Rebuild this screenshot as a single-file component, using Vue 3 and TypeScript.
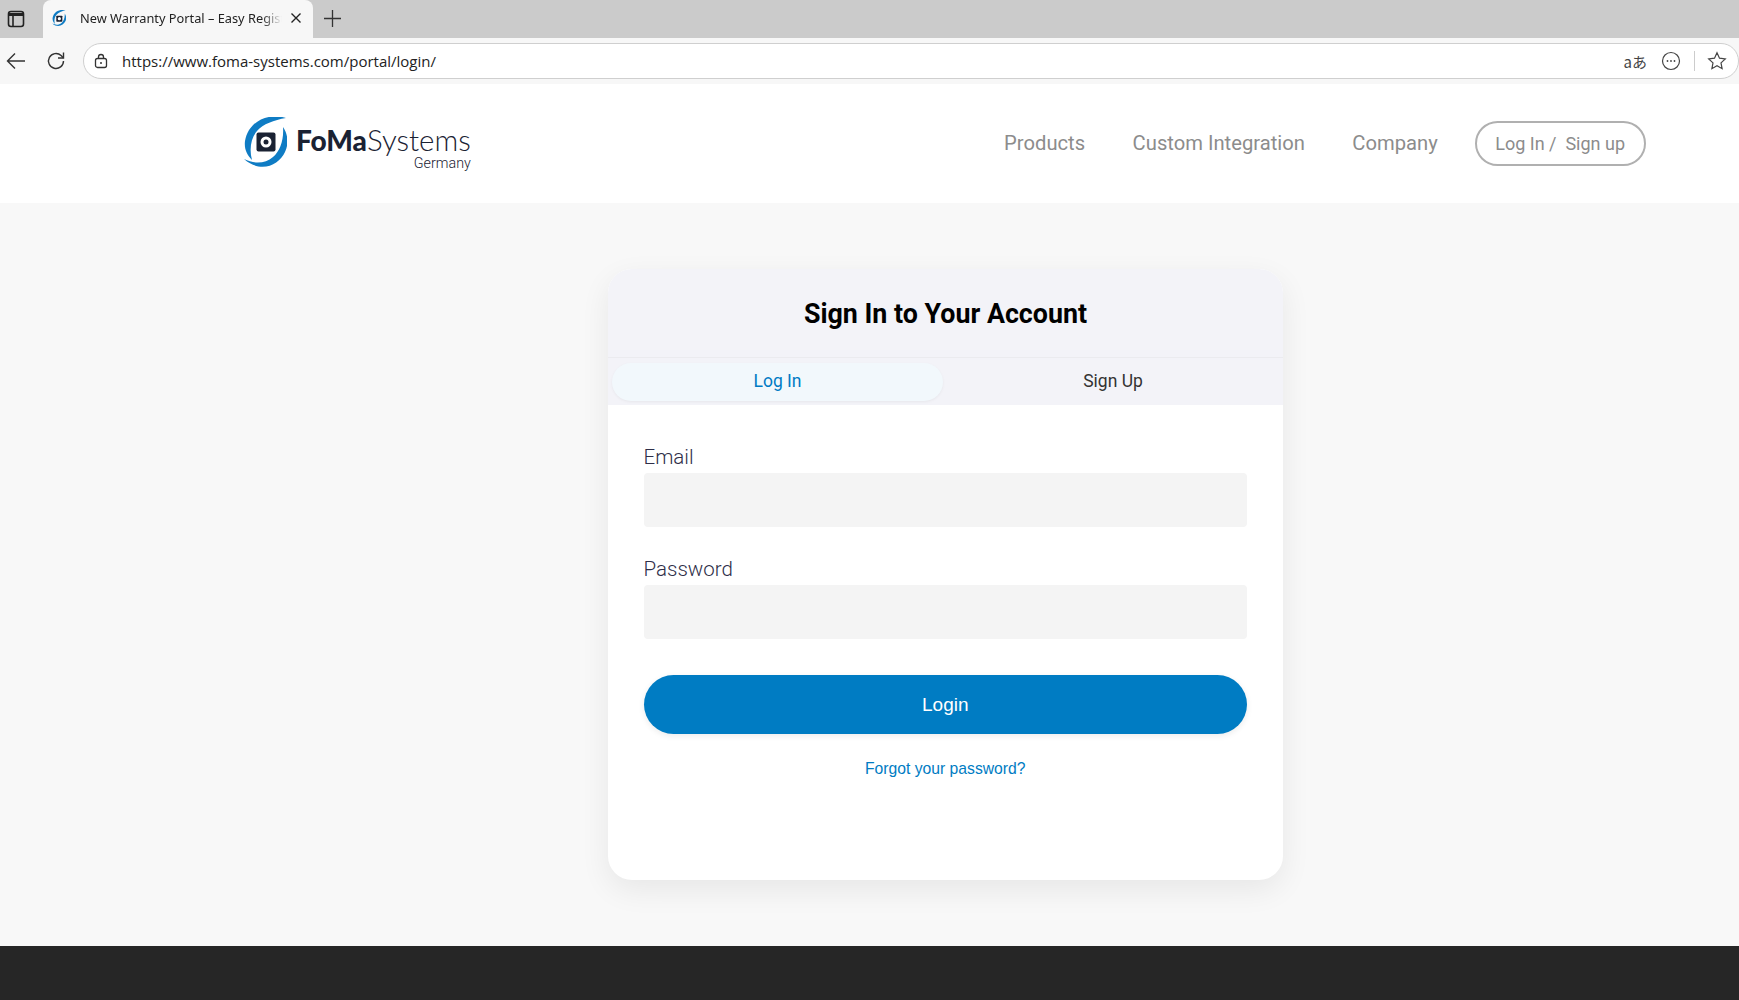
<template>
  <div class="page">
    <div class="tabbar">
      <div class="tab-toggle">
        <svg width="18" height="18" viewBox="0 0 18 18" fill="none" stroke="#222" stroke-width="1.6">
          <rect x="1.500" y="1.500" width="15" height="15" rx="2.500" />
          <path d="M1.500 4.500h15" stroke-width="3" />
          <path d="M6 5v11" />
        </svg>
      </div>
      <div class="tab">
        <svg class="favicon" width="14" height="17" viewBox="0 0 44 52">
          <path d="M43 1C28-4 6 2 2 24c-1 8 2 14 7 19-3-11-1-22 5-29C20 7 31 3 43 1z" fill="#0f7cc4" />
          <path d="M40 10c5 7 6 17 2 25C36 48 18 57 1 42c10 5 21 5 29-2 7-6 11-17 10-30z" fill="#0f7cc4" />
          <rect x="13.500" y="17" width="19" height="19" rx="2" fill="#1a2233" />
          <circle cx="23" cy="26.500" r="5" fill="#fff" />
        </svg>
        <span class="tab-title">New Warranty Portal – Easy Regist</span>
        <svg width="12" height="12" viewBox="0 0 12 12" stroke="#222" stroke-width="1.4">
          <path d="M1.500 1.500l9 9M10.500 1.500l-9 9" />
        </svg>
      </div>
      <svg class="new-tab" width="17" height="17" viewBox="0 0 17 17" stroke="#333" stroke-width="1.3">
        <path d="M8.500 0v17M0 8.500h17" />
      </svg>
    </div>

    <div class="toolbar">
      <svg class="nav-btn" width="20" height="18" viewBox="0 0 20 18" fill="none" stroke="#333" stroke-width="1.4">
        <path d="M19 9H1.500M9 1.500L1.500 9 9 16.500" />
      </svg>
      <svg class="nav-btn reload" width="20" height="20" viewBox="0 0 20 20" fill="none" stroke="#333" stroke-width="1.4">
        <path d="M17.500 10a7.500 7.500 0 1 1-2.400-5.500L17.500 7" />
        <path d="M17.500 1.500V7H12" />
      </svg>
      <div class="urlbar">
        <svg width="14" height="16" viewBox="0 0 14 16" fill="none" stroke="#333" stroke-width="1.3">
          <rect x="1.500" y="5.500" width="11" height="9" rx="2" />
          <path d="M4.500 5.500V4a2.500 2.500 0 0 1 5 0v1.500" />
          <circle cx="7" cy="10" r="1" fill="#333" stroke="none" />
        </svg>
        <span class="url">https://www.foma-systems.com/portal/login/</span>
        <span class="translate">aあ</span>
        <svg width="20" height="20" viewBox="0 0 20 20" fill="none" stroke="#444" stroke-width="1.2">
          <circle cx="10" cy="10" r="8.500" />
          <circle cx="6.500" cy="10" r=".9" fill="#444" stroke="none" />
          <circle cx="10" cy="10" r=".9" fill="#444" stroke="none" />
          <circle cx="13.500" cy="10" r=".9" fill="#444" stroke="none" />
        </svg>
        <span class="url-sep"></span>
        <svg width="20" height="20" viewBox="0 0 20 20" fill="none" stroke="#444" stroke-width="1.2">
          <path d="M10 1.800l2.500 5.400 5.800.7-4.300 4 1.100 5.800-5.100-2.900-5.100 2.900 1.100-5.800-4.300-4 5.800-.7z" />
        </svg>
      </div>
    </div>

    <header class="site-header">
      <a class="logo">
        <svg width="44" height="52" viewBox="0 0 44 52">
          <path d="M43 1C28-4 6 2 2 24c-1 8 2 14 7 19-3-11-1-22 5-29C20 7 31 3 43 1z" fill="#0f7cc4" />
          <path d="M40 10c5 7 6 17 2 25C36 48 18 57 1 42c10 5 21 5 29-2 7-6 11-17 10-30z" fill="#0f7cc4" />
          <rect x="13.500" y="15.500" width="19" height="19" rx="2" fill="#1a2233" />
          <circle cx="23" cy="25" r="5.500" fill="#fff" />
          <circle cx="23" cy="25" r="2.500" fill="#1a2233" />
        </svg>
        <div class="logo-text">
          <div class="logo-name"><b>FoMa</b>Systems</div>
          <div class="logo-sub">Germany</div>
        </div>
      </a>
      <nav class="site-nav">
        <a v-for="item in navItems" :key="item">{{ item }}</a>
        <a class="auth-link">Log In /&nbsp; Sign up</a>
      </nav>
    </header>

    <main class="main">
      <section class="card">
        <div class="card-head">
          <h1>Sign In to Your Account</h1>
        </div>
        <div class="tabs">
          <button class="tab-btn active">Log In</button>
          <button class="tab-btn">Sign Up</button>
        </div>
        <form class="form" @submit.prevent>
          <label for="email">Email</label>
          <input id="email" v-model="email" type="email" />
          <label for="password">Password</label>
          <input id="password" v-model="password" type="password" />
          <button class="submit" type="submit">Login</button>
          <a class="forgot">Forgot your password?</a>
        </form>
      </section>
    </main>

    <footer class="site-footer"></footer>
  </div>
</template>

<script setup lang="ts">
import { ref } from 'vue'

const navItems: string[] = ['Products', 'Custom Integration', 'Company']
const email = ref('')
const password = ref('')
</script>

<style>
html,
body {
  margin: 0;
  overflow: hidden;
}
</style>

<style scoped>
.page {
  height: 1000px;
  display: flex;
  flex-direction: column;
  background: #f8f8f8;
  font-family: Roboto, sans-serif;
}

/* browser chrome */
.tabbar {
  height: 38px;
  flex: none;
  display: flex;
  align-items: center;
  background: #cbcbcb;
}

.tab-toggle {
  width: 43px;
  padding: 0 0 1px 7px;
  box-sizing: border-box;
  display: flex;
}

.tab {
  width: 270px;
  height: 38px;
  box-sizing: border-box;
  padding: 0 11px 2px 9px;
  display: flex;
  align-items: center;
  background: #f7f7f7;
  border-radius: 8px 8px 0 0;
  font: 12.800px "Noto Sans", sans-serif;
  color: #222;
}

.favicon {
  flex: none;
  margin-right: 14px;
}

.tab-title {
  flex: 1;
  min-width: 0;
  overflow: hidden;
  white-space: nowrap;
  -webkit-mask-image: linear-gradient(to right, #000 90%, transparent);
  mask-image: linear-gradient(to right, #000 90%, transparent);
  margin-right: 8px;
}

.new-tab {
  margin: 0 0 2px 11px;
}

.toolbar {
  height: 46px;
  flex: none;
  display: flex;
  align-items: center;
  box-sizing: border-box;
  padding-left: 6px;
  background: #f7f7f7;
}

.nav-btn {
  flex: none;
  margin-right: 20px;
}

.reload {
  margin-right: 17px;
}

.urlbar {
  flex: 1;
  height: 36px;
  box-sizing: border-box;
  display: flex;
  align-items: center;
  padding: 0 11px 0 10px;
  background: #fff;
  border: 1px solid #cfcfcf;
  border-radius: 18px;
}

.url {
  flex: 1;
  margin-left: 14px;
  font: 15px "Open Sans", sans-serif;
  color: #222;
}

.translate {
  font: 15px "Noto Sans CJK JP", sans-serif;
  color: #444;
  margin-right: 14px;
}

.url-sep {
  width: 1px;
  height: 20px;
  margin: 0 12px 0 13px;
  background: #ccc;
}

/* site header */
.site-header {
  height: 119px;
  flex: none;
  box-sizing: border-box;
  display: flex;
  align-items: center;
  justify-content: space-between;
  padding: 0 93px 1px 243px;
  background: #fff;
}

.logo {
  display: flex;
  align-items: center;
  gap: 9px;
}

.logo-text {
  margin-top: 9px;
  color: #1a2233;
  line-height: 1;
}

.logo-name {
  font: 300 29.500px/28px Lato, sans-serif;
}

.logo-name b {
  font-size: 28px;
  font-weight: 900;
}

.logo-sub {
  margin-top: 2px;
  text-align: right;
  font: 300 14.300px/14px Roboto, sans-serif;
}

.site-nav {
  display: flex;
  align-items: center;
  gap: 47.500px;
  font-size: 20.200px;
  color: #8c8c8c;
}

.auth-link {
  height: 45px;
  box-sizing: border-box;
  display: flex;
  align-items: center;
  margin-left: -10px;
  padding: 0 19px 0 18px;
  border: 2px solid #b0b0b0;
  border-radius: 23px;
  font-size: 18px;
}

/* login card */
.main {
  flex: 1;
  display: flex;
  justify-content: center;
  align-items: flex-start;
  padding: 66px 0 0 152px;
  background: #f8f8f8;
}

.card {
  width: 675px;
  height: 611px;
  overflow: hidden;
  border-radius: 24px;
  background: #fff;
  box-shadow: 0 10px 30px rgba(0, 0, 0, 0.07);
}

.card-head {
  height: 89px;
  box-sizing: border-box;
  padding-top: 2px;
  display: flex;
  align-items: center;
  justify-content: center;
  background: #f3f3f8;
  border-bottom: 1px solid #ebebef;
}

.card-head h1 {
  margin: 0;
  font-size: 26.800px;
  font-weight: 700;
  color: #000;
}

.tabs {
  height: 47px;
  box-sizing: border-box;
  padding: 5px 0 4px 4px;
  display: grid;
  grid-template-columns: 331px 1fr;
  background: #f3f3f8;
}

.tab-btn {
  padding: 0 0 2px;
  border: 0;
  border-radius: 19px;
  background: transparent;
  font: 17.500px Roboto, sans-serif;
  color: #333;
}

.tab-btn.active {
  background: #f2f8fc;
  color: #007bc4;
  box-shadow: 0 1px 3px rgba(0, 0, 0, 0.05);
}

.form {
  display: flex;
  flex-direction: column;
  padding: 40px 36px 0 35.500px;
}

label {
  margin-bottom: 3px;
  font-size: 20.500px;
  font-weight: 300;
  line-height: 25px;
  color: #2e2e48;
}

input {
  height: 54px;
  box-sizing: border-box;
  margin-bottom: 30px;
  border: 0;
  border-radius: 4px;
  background: #f4f4f4;
}

.submit {
  height: 59px;
  margin-top: 6px;
  border: 0;
  border-radius: 30px;
  background: #007cc3;
  color: #fff;
  font: 19px "Liberation Sans", sans-serif;
  box-shadow: 0 2px 6px rgba(0, 0, 0, 0.08);
}

.forgot {
  margin-top: 26px;
  text-align: center;
  font: 15.700px "Liberation Sans", sans-serif;
  color: #007cc3;
}

.site-footer {
  height: 54px;
  flex: none;
  background: #262626;
}
</style>
